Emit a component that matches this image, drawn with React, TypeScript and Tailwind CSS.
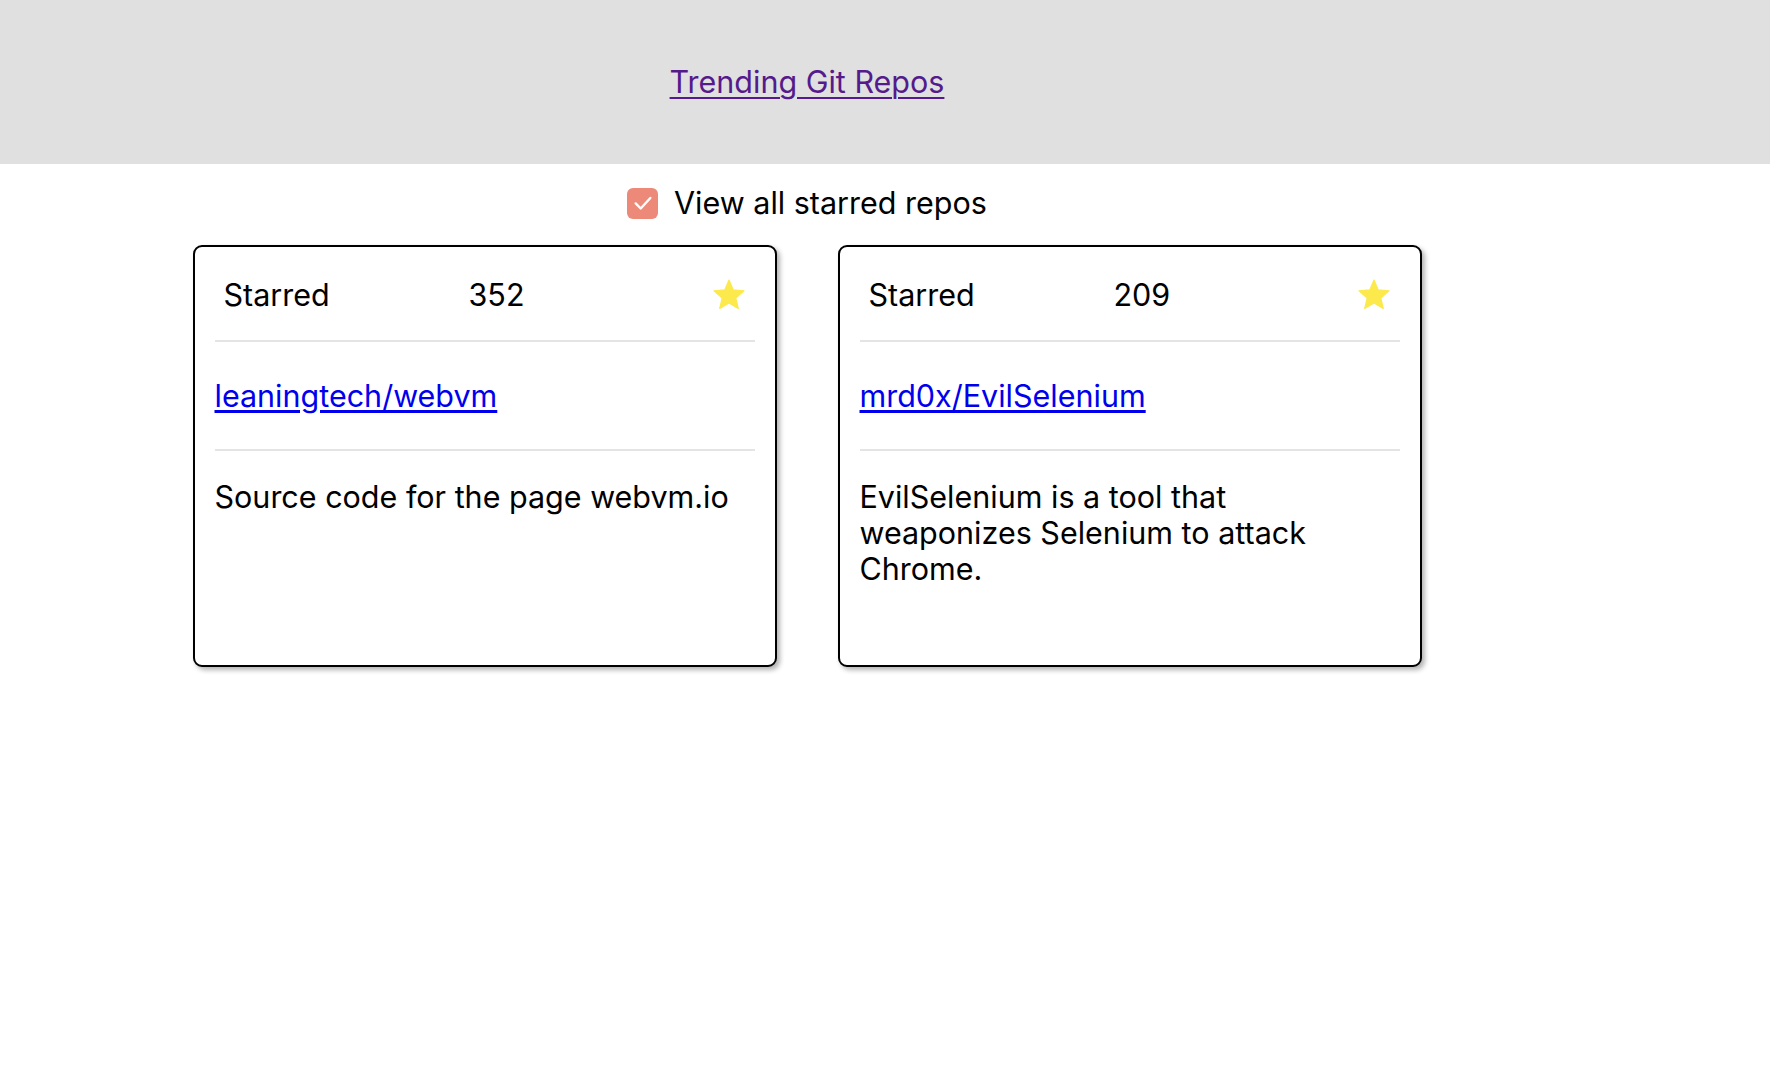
import React from "react";

type Repo = {
  name: string;
  stars: number;
  description: string;
};

const repos: Repo[] = [
  { name: "leaningtech/webvm", stars: 352, description: "Source code for the page webvm.io" },
  {
    name: "mrd0x/EvilSelenium",
    stars: 209,
    description: "EvilSelenium is a tool that weaponizes Selenium to attack Chrome.",
  },
];

function Star() {
  return (
    <svg width="36" height="36" viewBox="0 0 24 24" className="shrink-0">
      <path
        fill="#fce94c"
        stroke="#fce94c"
        strokeWidth="0.8"
        strokeLinejoin="round"
        d="M12 17.27L18.18 21l-1.64-7.03L22 9.24l-7.19-.61L12 2 9.19 8.63 2 9.24l5.46 4.73L5.82 21z"
      />
    </svg>
  );
}

function RepoCard({ repo }: { repo: Repo }) {
  return (
    <div className="w-[584px] h-[422px] border-2 border-black rounded-[9px] bg-white px-[20px] shadow-[3px_3px_5px_rgba(0,0,0,0.3)]">
      <div className="flex items-center pl-[9px] pr-[8px] h-[93px] pt-[3px]">
        <span className="w-[245px]">Starred</span>
        <span className="flex-1">{repo.stars}</span>
        <Star />
      </div>
      <div className="border-t-2 border-[#e4e4e4]" />
      <div className="pt-[36px] pb-[35px]">
        <a href="#" className="text-[#0000ee] underline underline-offset-[3px]">
          {repo.name}
        </a>
      </div>
      <div className="border-t-2 border-[#e4e4e4]" />
      <p className="pt-[28px] pr-[20px]">{repo.description}</p>
    </div>
  );
}

export default function App() {
  return (
    <div className="min-h-screen bg-white text-black text-[30.5px] leading-[36px] font-['Inter',sans-serif]">
      <header className="h-[164px] bg-[#e0e0e0]">
        <div className="w-[1614px] h-full flex items-center justify-center">
          <a href="#" className="text-[#551a8b] underline underline-offset-[4px] decoration-2">
            Trending Git Repos
          </a>
        </div>
      </header>
      <div className="w-[1614px]">
        <label className="mt-[21px] mb-[24px] flex items-center justify-center gap-[16px]">
          <span className="w-[31px] h-[31px] rounded-[6px] bg-[#ed8979] flex items-center justify-center">
            <svg width="22" height="22" viewBox="0 0 24 24" fill="none">
              <path d="M4 12.5l5.5 5.5L20 6.5" stroke="white" strokeWidth="2.6" strokeLinecap="round" strokeLinejoin="round" />
            </svg>
          </span>
          <span>View all starred repos</span>
        </label>
        <div className="flex justify-center gap-[61px]">
          {repos.map((r) => (
            <RepoCard key={r.name} repo={r} />
          ))}
        </div>
      </div>
    </div>
  );
}
